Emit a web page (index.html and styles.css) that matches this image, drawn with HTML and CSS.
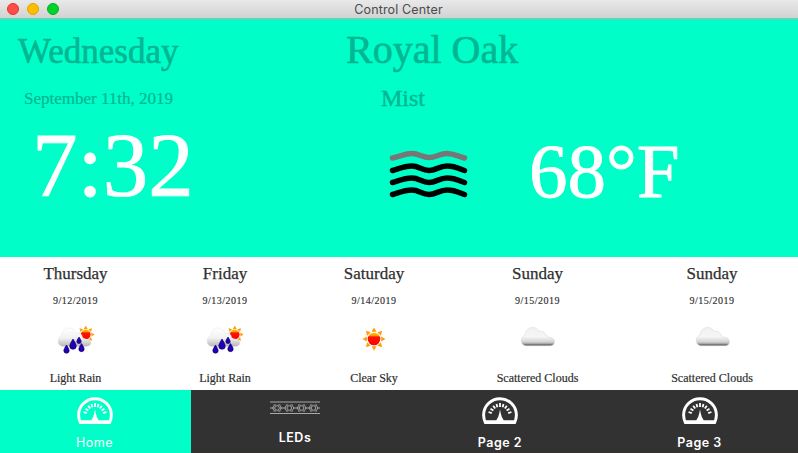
FILE: index.html
```html
<!DOCTYPE html>
<html lang="en">
<head>
<meta charset="utf-8">
<title>Control Center</title>
<link rel="stylesheet" href="styles.css">
</head>
<body>
<svg class="defs" width="0" height="0" aria-hidden="true">
  <defs>
    <linearGradient id="cloudFill" x1="0" y1="0" x2="0" y2="1">
      <stop offset="0" stop-color="#f0f0f0"/><stop offset=".5" stop-color="#f6f6f6"/><stop offset=".8" stop-color="#d2d2d2"/><stop offset=".88" stop-color="#aaa"/><stop offset="1" stop-color="#444"/>
    </linearGradient>
    <linearGradient id="rainCloud" x1="0" y1="0" x2="0" y2="1">
      <stop offset="0" stop-color="#fff"/><stop offset=".55" stop-color="#f1f1f1"/><stop offset="1" stop-color="#b5b5b5"/>
    </linearGradient>
    <linearGradient id="sunFill" x1="0" y1="0" x2="0" y2="1">
      <stop offset="0" stop-color="#ffc400"/><stop offset=".22" stop-color="#ff9d00"/><stop offset=".34" stop-color="#ff1500"/><stop offset="1" stop-color="#f00"/>
    </linearGradient>
    <symbol id="sun" viewBox="-12 -12 24 24">
      <g fill="#ff9d0a">
        <path id="ray" d="M0-11.500L2.500-7.200H-2.500Z"/>
        <use href="#ray" transform="rotate(45)"/><use href="#ray" transform="rotate(90)"/><use href="#ray" transform="rotate(135)"/><use href="#ray" transform="rotate(180)"/><use href="#ray" transform="rotate(225)"/><use href="#ray" transform="rotate(270)"/><use href="#ray" transform="rotate(315)"/>
      </g>
      <circle r="6.300" fill="url(#sunFill)"/>
    </symbol>
    <symbol id="cloud" viewBox="0 0 36 22">
      <path d="M6 19.700C2.800 19.500 1 17 1.200 14.100C1.400 11.500 3 10 5 9.400C5.300 4.500 8.500 1.500 12.800 1.500C16 1.500 18 3.200 19.300 5.600C22.500 4.500 25.500 6.300 26 9.800C27.500 9.800 28.500 10.600 29 11.500C32 11 34.500 13 34.500 15.400C34.500 18 32.800 19.700 30 19.700Z" fill="url(#cloudFill)" stroke="#d4d4d4" stroke-width=".5"/>
    </symbol>
    <symbol id="rain" viewBox="0 0 38 30">
      <use href="#sun" x="19.500" y=".2" width="18.500" height="18.500"/>
      <path d="M6.500 21.500C3 21.500 1 19.200 1 16C1 13 2.500 11.300 4.800 10.500C5 6 8 3 12 3C16 3 18.500 5.500 19.500 8.500C22.500 7.300 25 9 25.500 12.500C28 14 29 14 30 14.500C33 14.500 34 16 34 17.500C34 20 32 21.500 29 21.500Z" fill="url(#rainCloud)" stroke="#e4e4e4" stroke-width=".5"/>
      <g fill="#2200b4" stroke="#0a0065" stroke-width=".6">
        <path d="M16 14Q19.300 19 19.300 21A3.200 3.200 0 0 1 12.700 21Q12.700 19 16 14Z"/>
        <path d="M22 12Q24.200 15.200 24.200 16.400A2.200 2.200 0 0 1 19.800 16.400Q19.800 15.200 22 12Z"/>
        <path d="M9.500 20Q12.200 24 12.200 25.500A2.700 2.700 0 0 1 6.800 25.500Q6.800 24 9.500 20Z"/>
        <path d="M24.500 18.500Q27.200 22.500 27.200 24A2.700 2.700 0 0 1 21.800 24Q21.800 22.500 24.500 18.500Z"/>
      </g>
    </symbol>
    <symbol id="gauge" viewBox="0 0 36 28">
      <path d="M3.400 25.600Q1.600 22 1.600 18A16.400 16.200 0 0 1 34.400 18Q34.400 22 32.600 25.600Z" fill="none" stroke="#fff" stroke-width="3"/>
      <path d="M3 23.300H14.300Q16.300 21 17.200 16.500L18 12.500L18.800 16.500Q19.700 21 21.700 23.300H33L32.600 26.800H3.400Z" fill="#fff"/>
      <path d="M6.600 15L9.800 16.200M8.500 11.700L11.400 13.500M11.200 8.800L13.200 11.500M14.500 6.900L15.400 10.200M18 6V10M21.500 6.900L20.600 10.200M24.800 8.800L22.800 11.500M27.500 11.700L24.600 13.500M29.400 15L26.200 16.200" stroke="#fff" stroke-width="1.800"/>
    </symbol>
  </defs>
</svg>
<div class="window">
  <header class="titlebar">
    <div class="lights"><i class="close"></i><i class="minimize"></i><i class="expand"></i></div>
    <div class="title">Control Center</div>
  </header>
  <main class="current">
    <section class="now">
      <div class="weekday">Wednesday</div>
      <div class="date">September 11th, 2019</div>
      <div class="time">7:32</div>
    </section>
    <section class="weather">
      <div class="city">Royal Oak</div>
      <div class="condition">Mist</div>
      <div class="reading">
        <svg class="mist" viewBox="0 0 82 54">
          <g fill="none" stroke-width="5.500" stroke-linecap="round" stroke-linejoin="round">
            <path stroke="#777" d="M4.500 9C12 7.500 17 4.500 24 4.500S34 8.500 41 8.500S52 4.500 59 4.500S70 7.500 76.500 9"/>
            <path id="wave" stroke="#000" d="M4.500 21.500C11 19.500 17 17 24 17S34 21.500 41 21.500S51 17 59 17S71 19.500 76.500 21.500"/>
            <use href="#wave" y="12"/><use href="#wave" y="24"/>
          </g>
        </svg>
        <div class="temp">68°F</div>
      </div>
    </section>
  </main>
  <section class="forecast">
    <article class="day"><h2>Thursday</h2><time>9/12/2019</time><svg class="rain"><use href="#rain"/></svg><p>Light Rain</p></article>
    <article class="day"><h2>Friday</h2><time>9/13/2019</time><svg class="rain"><use href="#rain"/></svg><p>Light Rain</p></article>
    <article class="day"><h2>Saturday</h2><time>9/14/2019</time><svg class="sun"><use href="#sun"/></svg><p>Clear Sky</p></article>
    <article class="day"><h2>Sunday</h2><time>9/15/2019</time><svg class="cloud"><use href="#cloud"/></svg><p>Scattered Clouds</p></article>
    <article class="day"><h2>Sunday</h2><time>9/15/2019</time><svg class="cloud"><use href="#cloud"/></svg><p>Scattered Clouds</p></article>
  </section>
  <nav class="tabs">
    <a class="tab active"><svg class="gauge"><use href="#gauge"/></svg><span>Home</span></a>
    <a class="tab leds">
      <svg class="strip" viewBox="0 0 50 14">
        <path d="M0 1H50M0 12.500H50" stroke="#a8a8a8" stroke-width="1"/>
        <g fill="none" stroke="#a2a2a2" stroke-width="1">
          <path d="M0 7H4M10 7H16M23 7H29M35 7H41M47 7H50"/>
          <g id="led"><circle cx="7" cy="7" r="2.300"/><path d="M3.500 4H10.500M3.500 10H10.500" stroke-dasharray="2.500 2"/><path d="M4 4.500L2.500 7L4 9.500M10 4.500L11.500 7L10 9.500"/></g>
          <use href="#led" x="12.300"/><use href="#led" x="24.600"/><use href="#led" x="36.500"/>
        </g>
      </svg>
      <span>LEDs</span></a>
    <a class="tab"><svg class="gauge"><use href="#gauge"/></svg><span>Page 2</span></a>
    <a class="tab"><svg class="gauge"><use href="#gauge"/></svg><span>Page 3</span></a>
  </nav>
</div>
</body>
</html>
```
FILE: styles.css
```css
* { box-sizing: border-box; }
body { margin: 0; background: #fff; font-family: "Liberation Serif", "Times New Roman", serif; color: #303030; overflow: hidden; }
svg { display: block; overflow: visible; }
.defs { position: absolute; }
.window { width: 798px; height: 453px; display: grid; grid-template-rows: 19px 238px 133px 63px; }

.titlebar { display: grid; grid-template-columns: 70px 1fr 71px; background: linear-gradient(#e9e9e9, #d2d2d2); border-bottom: 1px solid #b0aeb0; }
.lights { display: flex; gap: 8px; padding: 3px 0 0 7px; }
.lights i { width: 12px; height: 12px; border-radius: 50%; border-width: 1px; border-style: solid; }
.close { background: #ff4c47; border-color: #e5302c; }
.minimize { background: #ffbd00; border-color: #e5a200; }
.expand { background: #00d22c; border-color: #00b31b; }
.title { text-align: center; font: 12.5px/19px Inter, sans-serif; letter-spacing: .15px; color: #4b4b4b; }

.current { display: grid; grid-template-columns: 346px 1fr; background: #00ffc8; color: #00b693; }
.now { padding: 13px 0 0 18px; }
.weekday { font-size: 35px; line-height: 40px; -webkit-text-stroke: .6px; }
.date { margin: 17px 0 7px 6px; font-size: 17px; line-height: 20px; -webkit-text-stroke: .2px; }
.time { margin-left: 14px; font-size: 91px; line-height: 100px; color: #fff; -webkit-text-stroke: .8px; }
.weather { padding-top: 11px; }
.city { font-size: 40px; line-height: 40px; -webkit-text-stroke: .6px; }
.condition { margin: 16px 0 0 35px; font-size: 24px; line-height: 24px; -webkit-text-stroke: .4px; }
.reading { display: flex; margin-left: 42px; padding-top: 21px; }
.mist { width: 82px; height: 54px; margin-top: 18px; filter: blur(.5px); }
.temp { margin-left: 59px; font-size: 77px; line-height: 80px; color: #fff; -webkit-text-stroke: .8px; }

.forecast { display: grid; grid-template-columns: 151px 148px 150px 177px 172px; background: #fff; }
.day { display: grid; grid-template-rows: 33px 21px 58px 19px 2px; justify-items: center; align-items: center; }
.day h2 { margin: 0; font-size: 17px; font-weight: 400; line-height: 33px; -webkit-text-stroke: .25px; }
.day time { font-size: 10px; line-height: 21px; letter-spacing: .5px; -webkit-text-stroke: .15px; }
.day p { margin: 0; font-size: 12px; line-height: 19px; -webkit-text-stroke: .2px; }
.rain { width: 38px; height: 30px; margin-bottom: 1px; }
.sun { width: 24px; height: 24px; margin-bottom: 2px; }
.cloud { width: 36px; height: 22px; margin: 0 0 6px 1px; }

.tabs { display: grid; grid-template-columns: 191px 208px 202px 197px; background: #323232; border-bottom: 1px solid #3a3032; }
.tab { display: flex; flex-direction: column; align-items: center; padding-top: 7px; color: #fff; font: 600 12.500px/16px Inter, sans-serif; letter-spacing: .5px; }
.tab.active { padding-right: 2px; background: #00ffc8; font-weight: 400; margin-bottom: -1px; }
.gauge { width: 36px; height: 28px; margin-bottom: 10px; }
.strip { width: 50px; height: 14px; margin: 4px 0 15px; }
```
